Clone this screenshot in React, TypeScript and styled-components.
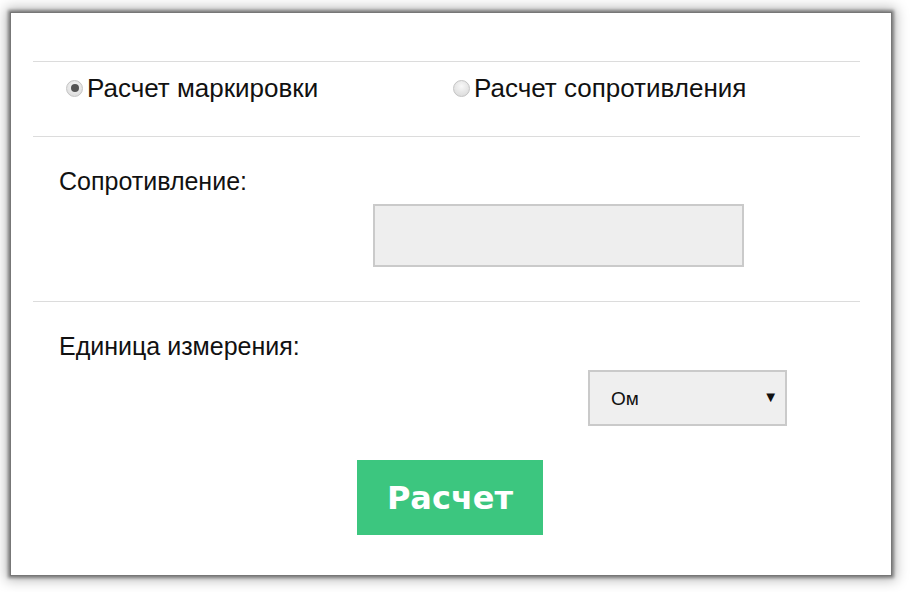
import styled, { createGlobalStyle } from "styled-components";

const GlobalStyle = createGlobalStyle`
  html, body {
    margin: 0;
    padding: 0;
    background: #ffffff;
  }
  body {
    font-family: "Liberation Sans", Arial, sans-serif;
    color: #111;
  }
  #root {
    width: 912px;
    height: 592px;
    overflow: hidden;
  }
`;

// Card with dark blurred frame
const Card = styled.div`
  margin: 12px 0 0 10px;
  width: 882px;
  height: 564px;
  box-sizing: border-box;
  background: #fff;
  border: 1px solid #777;
  box-shadow: 0 0 3px 2px rgba(0, 0, 0, 0.4), 0 0 12px 4px rgba(0, 0, 0, 0.28);
  padding: 48px 31px 0 22px;
  display: flex;
  flex-direction: column;
`;

const Divider = styled.hr`
  margin: 0;
  border: none;
  height: 1px;
  background: #dcdcdc;
`;

const RadioRow = styled.div`
  display: grid;
  grid-template-columns: 387px 1fr;
  align-items: start;
  padding: 11px 0 0 33px;
  height: 74px;
  box-sizing: border-box;
`;

const RadioLabel = styled.label`
  display: flex;
  align-items: center;
  gap: 4px;
  font-size: 26px;
  line-height: 30px;
  cursor: pointer;
`;

const RadioDot = styled.span<{ $checked?: boolean }>`
  width: 15px;
  height: 15px;
  border-radius: 50%;
  border: 1px solid #c4c4c4;
  background: radial-gradient(circle at 50% 35%, #f8f8f8 0%, #d6d6d6 100%);
  display: flex;
  align-items: center;
  justify-content: center;
  flex-shrink: 0;

  &::after {
    content: "";
    display: ${({ $checked }) => ($checked ? "block" : "none")};
    width: 8px;
    height: 8px;
    border-radius: 50%;
    background: #555;
  }
`;

const Section = styled.div<{ $height: number }>`
  height: ${({ $height }) => $height}px;
  box-sizing: border-box;
  padding: 30px 0 0 26px;
  display: flex;
  flex-direction: column;
`;

const FieldLabel = styled.div`
  font-size: 25px;
  line-height: 29px;
`;

const FieldSlot = styled.div<{ $offset: number; $gap: number }>`
  margin: ${({ $gap }) => $gap}px 0 0 ${({ $offset }) => $offset}px;
`;

const TextInput = styled.input`
  display: block;
  width: 371px;
  height: 63px;
  box-sizing: border-box;
  background: #eeeeee;
  border: 2px solid #cacaca;
  outline: none;
  font-family: inherit;
  font-size: 20px;
  padding: 0 14px;
`;

const SelectWrap = styled.div`
  position: relative;
  width: 199px;
  height: 56px;
`;

const Select = styled.select`
  appearance: none;
  width: 100%;
  height: 100%;
  box-sizing: border-box;
  background: #efefef;
  border: 2px solid #cacaca;
  border-radius: 0;
  outline: none;
  font-family: "Liberation Sans", Arial, sans-serif;
  font-size: 19px;
  color: #111;
  padding: 0 0 0 21px;
`;

const Arrow = styled.span`
  position: absolute;
  right: 9px;
  top: 50%;
  transform: translateY(-56%);
  font-size: 15px;
  color: #111;
  pointer-events: none;
`;

const ButtonRow = styled.div`
  padding: 34px 0 0 298px;
`;

const SubmitButton = styled.button`
  width: 186px;
  height: 75px;
  border: none;
  background: #3cc67f;
  color: #fff;
  font-family: "DejaVu Sans", Verdana, sans-serif;
  font-weight: bold;
  font-size: 32px;
  cursor: pointer;
`;

export default function App() {
  return (
    <>
      <GlobalStyle />
      <Card>
        <Divider />
        <RadioRow>
          <RadioLabel>
            <RadioDot $checked />
            Расчет маркировки
          </RadioLabel>
          <RadioLabel>
            <RadioDot />
            Расчет сопротивления
          </RadioLabel>
        </RadioRow>
        <Divider />
        <Section $height={164}>
          <FieldLabel>Сопротивление:</FieldLabel>
          <FieldSlot $offset={314} $gap={8}>
            <TextInput type="text" />
          </FieldSlot>
        </Section>
        <Divider />
        <Section $height={240}>
          <FieldLabel>Единица измерения:</FieldLabel>
          <FieldSlot $offset={529} $gap={9}>
            <SelectWrap>
              <Select defaultValue="om">
                <option value="om">Ом</option>
                <option value="kom">кОм</option>
                <option value="mom">МОм</option>
              </Select>
              <Arrow>▼</Arrow>
            </SelectWrap>
          </FieldSlot>
          <ButtonRow>
            <SubmitButton>Расчет</SubmitButton>
          </ButtonRow>
        </Section>
      </Card>
    </>
  );
}
